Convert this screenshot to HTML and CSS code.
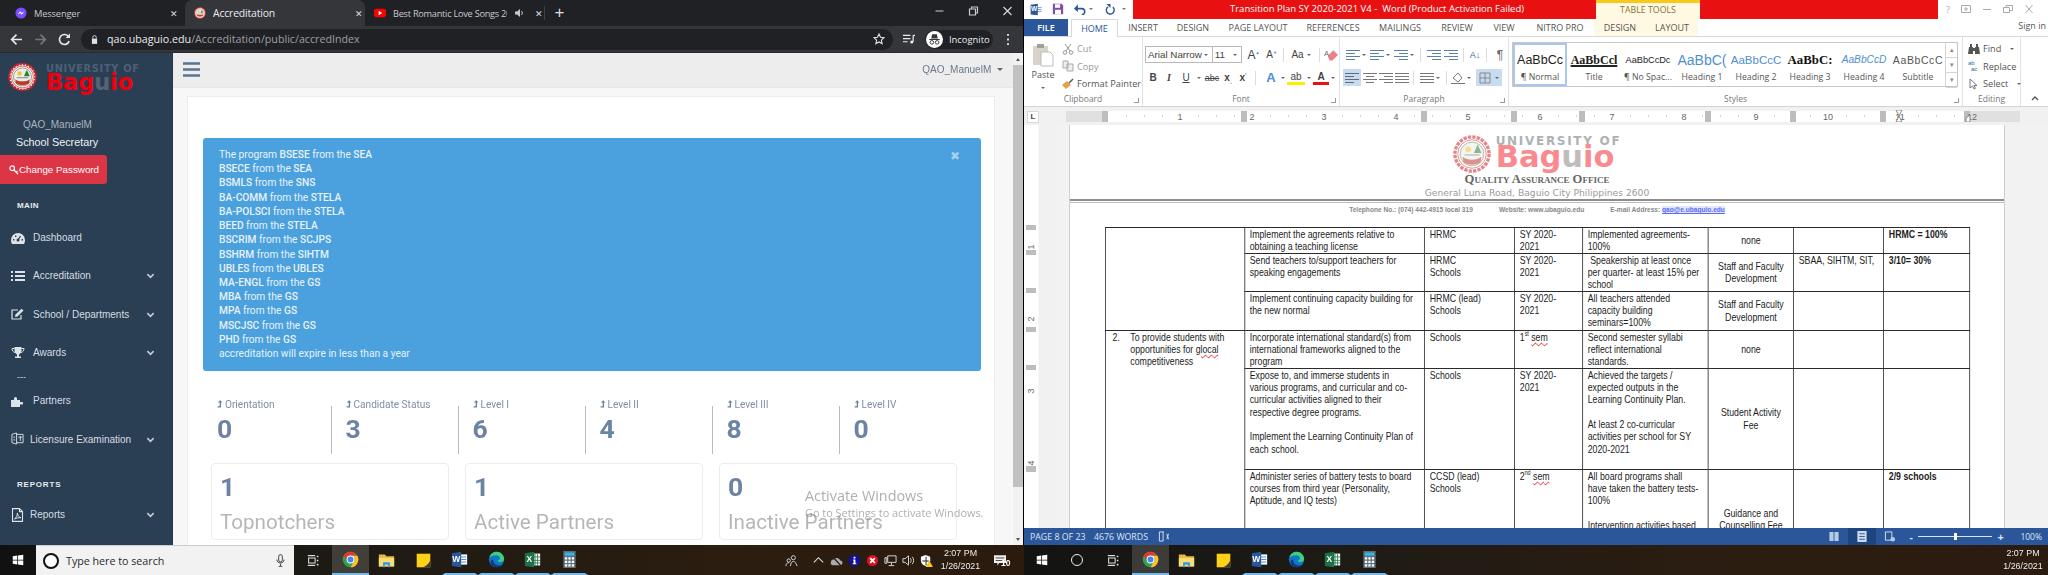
FILE: index.html
```html
<!DOCTYPE html>
<html lang="en">
<head>
<meta charset="utf-8">
<title>Desktop</title>
<link rel="stylesheet" href="styles.css">
</head>
<body>
<svg class="defs" aria-hidden="true">
  <symbol id="seal" viewBox="0 0 40 40">
    <circle cx="20" cy="20" r="18" fill="#fff" stroke="#d2232a" stroke-width="3.5" stroke-dasharray="3.5 1.2"/>
    <circle cx="20" cy="20" r="15" fill="#fff" stroke="#c0392b" stroke-width="1"/>
    <circle cx="20" cy="20" r="12.5" fill="#e9efe9" stroke="#777" stroke-width="1"/>
    <circle cx="16" cy="15" r="3" fill="#f2c230"/>
    <path d="M26 10l4 9h-8z" fill="#2e7d32"/>
    <path d="M10 23c5 4 15 4 20 0l-1 6c-5 3-13 3-18 0z" fill="#c0392b"/>
    <path d="M12 21h16" stroke="#888" stroke-width="1.4"/>
  </symbol>
  <symbol id="win" viewBox="0 0 16 16"><path fill="#fff" d="M1 3l6-.9V7.500H1zM8 2l7-1v6.500H8zM1 8.500h6v5.400l-6-.9zM8 8.500h7V15l-7-1z"/></symbol>
  <symbol id="taskview" viewBox="0 0 16 16"><path fill="none" stroke="#ddd" stroke-width="1.300" d="M1 2h9M1 14h9M2 5h8v6H2z"/><path stroke="#ddd" stroke-width="2" d="M13 2v2M13 7v2M13 12v2"/></symbol>
  <symbol id="chrome" viewBox="0 0 24 24">
    <circle cx="12" cy="12" r="11" fill="#2fa24d"/>
    <path fill="#fbc02d" d="M21.530 6.500A11 11 0 0 1 12 23l4.760-8.250A5.500 5.500 0 0 0 12 6.500z"/>
    <path fill="#e53935" d="M12 1a11 11 0 0 1 9.530 5.500H12a5.500 5.500 0 0 0-4.760 8.250L2.470 6.500A11 11 0 0 1 12 1z"/>
    <circle cx="12" cy="12" r="5.500" fill="#fff"/><circle cx="12" cy="12" r="4.200" fill="#4285f4"/>
  </symbol>
  <symbol id="explorer" viewBox="0 0 20 20"><path fill="#e8b93e" d="M1 3h7l2 2h9v12H1z"/><path fill="#f9dc7a" d="M1 7h18v10H1z"/><path fill="#2e9bdc" d="M6 12h8v6h-2v-3H8v3H6z"/></symbol>
  <symbol id="sticky" viewBox="0 0 20 20"><path fill="#fcd116" d="M2 2h16v16H2z"/><path fill="#3a3a3a" d="M18 9v9H9c4-1 8-5 9-9z"/></symbol>
  <symbol id="word" viewBox="0 0 20 20"><path fill="#fff" d="M9 4h10v12H9z"/><path stroke="#2b7cd3" d="M12 7h6M12 10h6M12 13h6"/><path fill="#2b579a" d="M1 2.500L12 1v18L1 17.500z"/><text x="6.200" y="13" class="icon-letter" text-anchor="middle">W</text></symbol>
  <symbol id="excel" viewBox="0 0 20 20"><path fill="#fff" d="M9 3h10v14H9z"/><path stroke="#217346" fill="none" d="M13 3v14M16 3v14M9 7h10M9 11h10M9 14h10"/><path fill="#1e7145" d="M1 2.500L12 1v18L1 17.500z"/><text x="6.200" y="13" class="icon-letter" text-anchor="middle">X</text></symbol>
  <symbol id="edge" viewBox="0 0 20 20"><circle cx="10" cy="10" r="9" fill="#0f78c8"/><path fill="#3fd07d" d="M1.500 8C3 3 7 1 10 1c5 0 9 4 9 8.500 0 2.500-2 3.500-4.500 3.500-1.500 0-3-.6-3.500-1.500 2-.5 3-1.500 3-3C14 6 12 5 9.500 5 6 5 3 6.500 1.500 8z"/><path fill="#123a7d" d="M6 10c0 4 3 7 7 7 1.500 0 3-.5 4-1.500-1 2.500-4 3.500-7 3.500-4 0-7-3-7-6 0-1.500 1-3 3-3z"/></symbol>
  <symbol id="calc" viewBox="0 0 18 22"><path fill="#5c6f7b" d="M1 0h16v22H1z"/><path fill="#37b6e8" d="M3 2h12v4H3z"/><path fill="#fff" d="M3 8h3v3H3zM7.500 8h3v3h-3zM12 8h3v3h-3zM3 12.500h3v3H3zM7.500 12.500h3v3h-3zM12 12.500h3v3h-3zM3 17h3v3H3zM7.500 17h3v3h-3zM12 17h3v3h-3z"/></symbol>
  <symbol id="chev" viewBox="0 0 10 10"><path fill="none" stroke="currentColor" stroke-width="1.800" d="M1.500 3.500L5 7l3.500-3.500"/></symbol>
  <symbol id="levelup" viewBox="0 0 8 10"><path fill="currentColor" d="M4.200 0L7.200 3H5.400v6.500H.8V8h2.800V3H1.200z"/></symbol>
  <symbol id="l-left" viewBox="0 0 14 12"><path stroke="currentColor" d="M0 1.500h14M0 4.500h9M0 7.500h14M0 10.500h9"/></symbol>
  <symbol id="l-center" viewBox="0 0 14 12"><path stroke="currentColor" d="M0 1.500h14M3 4.500h8M0 7.500h14M3 10.500h8"/></symbol>
  <symbol id="l-right" viewBox="0 0 14 12"><path stroke="currentColor" d="M0 1.500h14M5 4.500h9M0 7.500h14M5 10.500h9"/></symbol>
  <symbol id="l-just" viewBox="0 0 14 12"><path stroke="currentColor" d="M0 1.500h14M0 4.500h14M0 7.500h14M0 10.500h14"/></symbol>
</svg>

<div class="desktop">
  <!-- ============ browser ============ -->
  <section class="chrome">
    <div class="tabstrip">
      <div class="tab first">
        <svg class="favicon" viewBox="0 0 14 14"><circle cx="7" cy="7" r="6.500" fill="#7a4dff"/><path d="M3 9l3-4 2 2 3-2-3 4-2-2z" fill="#fff"/></svg>
        <span class="tab-title">Messenger</span><span class="tab-x">✕</span>
      </div>
      <div class="tab active">
        <svg class="favicon"><use href="#seal"/></svg>
        <span class="tab-title">Accreditation</span><span class="tab-x">✕</span>
      </div>
      <div class="tab last">
        <svg class="favicon" viewBox="0 0 14 14"><rect y="2" width="14" height="10" rx="2.500" fill="#f00"/><path d="M5.500 4.500v5l4-2.500z" fill="#fff"/></svg>
        <span class="tab-title">Best Romantic Love Songs 20</span>
        <svg class="tab-sound" viewBox="0 0 10 10"><path fill="#c8c8c8" d="M0 3.500h2L5 1v8L2 6.500H0z"/><path fill="none" stroke="#c8c8c8" d="M6.500 3c1 1 1 3 0 4"/></svg>
        <span class="tab-x">✕</span>
      </div>
      <span class="tab-plus">+</span>
      <div class="winctl">
        <svg viewBox="0 0 10 10"><path stroke="#ccc" d="M1 5h8"/></svg>
        <svg viewBox="0 0 10 10"><path fill="none" stroke="#ccc" stroke-width="1.200" d="M1 3h6v6H1zM3 3V1h6v6H7"/></svg>
        <svg viewBox="0 0 10 10"><path stroke="#ddd" stroke-width="1.100" d="M1 1l8 8M9 1L1 9"/></svg>
      </div>
    </div>
    <div class="toolbar">
      <svg class="nav-ic" viewBox="0 0 12 12"><path fill="none" stroke="#e8eaed" stroke-width="1.500" d="M11 6H1.500M6 1.500L1.500 6 6 10.500"/></svg>
      <svg class="nav-ic" viewBox="0 0 12 12"><path fill="none" stroke="#777" stroke-width="1.500" d="M1 6h9.500M6 1.500L10.500 6 6 10.500"/></svg>
      <svg class="nav-ic" viewBox="0 0 12 12"><path fill="none" stroke="#e8eaed" stroke-width="1.500" d="M10.300 7.500A4.600 4.600 0 1 1 9.500 3"/><path fill="#e8eaed" d="M7 4.500h4V.5z"/></svg>
      <div class="omnibox">
        <svg class="lock" viewBox="0 0 8 10"><path fill="#dfe1e5" d="M1 4h6v6H1z"/><path fill="none" stroke="#dfe1e5" d="M2 4V2.500a2 2 0 0 1 4 0V4"/></svg>
        <span class="url"><b>qao.ubaguio.edu</b>/Accreditation/public/accredIndex</span>
        <svg class="star" viewBox="0 0 12 12"><path fill="none" stroke="#dfe1e5" stroke-width="1.100" d="M6 1l1.500 3.300 3.500.4-2.600 2.400.7 3.500L6 8.900l-3.100 1.700.7-3.500L1 4.700l3.500-.4z"/></svg>
      </div>
      <svg class="media" viewBox="0 0 13 10"><path stroke="#e8eaed" stroke-width="1.300" d="M0 1h8M0 4.500h8M0 8h5"/><path fill="none" stroke="#e8eaed" stroke-width="1.300" d="M11 1h2M11 1v7"/><circle cx="9.500" cy="8.200" r="1.700" fill="#e8eaed"/></svg>
      <div class="incognito">
        <svg viewBox="0 0 18 18"><circle cx="9" cy="9" r="9" fill="#fff"/><path fill="#35363a" d="M5.500 8l1-4.500h5l1 4.500zM3.500 8.500h11v1h-11z"/><circle cx="6.200" cy="12" r="1.900" fill="none" stroke="#35363a"/><circle cx="11.800" cy="12" r="1.900" fill="none" stroke="#35363a"/></svg>
        <span>Incognito</span>
      </div>
      <svg class="dots" viewBox="0 0 4 12"><path fill="#e8eaed" d="M1 0h2v2H1zM1 5h2v2H1zM1 10h2v2H1z"/></svg>
    </div>
    <div class="site">
      <aside class="sidebar">
        <div class="brand">
          <svg class="brand-seal"><use href="#seal"/></svg>
          <div class="brand-text">
            <div class="brand-top">UNIVERSITY OF</div>
            <div class="brand-name">Bag<i>u</i>io</div>
          </div>
        </div>
        <div class="user-name">QAO_ManuelM</div>
        <div class="user-role">School Secretary</div>
        <a class="btn-pass">
          <svg viewBox="0 0 10 10"><circle cx="3.200" cy="3.200" r="2.300" fill="none" stroke="#fff" stroke-width="1.200"/><path stroke="#fff" stroke-width="1.300" d="M5 5l4 4M7 7l1.500-1"/></svg>
          Change Password
        </a>
        <h3 class="nav-head main">MAIN</h3>
        <a class="nav-item"><svg class="nav-svg" viewBox="0 0 14 12"><path fill="#dce3e9" d="M7 1a7 7 0 0 0-7 7c0 1.500.5 3 1 4h12c.5-1 1-2.500 1-4a7 7 0 0 0-7-7z"/><path stroke="#2a3f54" stroke-width="1.300" d="M7 8l2.500-4"/><circle cx="7" cy="8" r="1.500" fill="#2a3f54"/><path fill="#2a3f54" d="M2 7h1.400v1.400H2zM4 3.500h1.400v1.400H4zM10.600 7H12v1.400h-1.400z"/></svg><span>Dashboard</span></a>
        <a class="nav-item has-sub"><svg class="nav-svg" viewBox="0 0 14 12"><path stroke="#dce3e9" stroke-width="2" d="M0 2h2M4 2h10M0 6h2M4 6h10M0 10h2M4 10h10"/></svg><span>Accreditation</span><svg class="chev"><use href="#chev"/></svg></a>
        <a class="nav-item has-sub"><svg class="nav-svg" viewBox="0 0 14 12"><path fill="none" stroke="#dce3e9" stroke-width="1.200" d="M10 7v4H1V2h6"/><path fill="#dce3e9" d="M4.500 6.500L10.500.8l2 1.700L6.500 8.500l-2.500.5z"/></svg><span>School / Departments</span><svg class="chev"><use href="#chev"/></svg></a>
        <a class="nav-item has-sub"><svg class="nav-svg" viewBox="0 0 14 12"><path fill="#dce3e9" d="M3.500 0h7v3.500c0 2-1.500 3.500-2.500 4V9.500h2V11H4V9.500h2v-2C5 7 3.500 5.500 3.500 3.500z"/><path fill="none" stroke="#dce3e9" d="M3.500 1.500H1c0 2 1 3.500 3 4M10.500 1.500H13c0 2-1 3.500-3 4"/></svg><span>Awards</span><svg class="chev"><use href="#chev"/></svg></a>
        <div class="nav-dash">---</div>
        <a class="nav-item"><svg class="nav-svg" viewBox="0 0 14 12"><path fill="#dce3e9" d="M0 5h3V3.500a1.500 1.500 0 1 1 3 0V5h3v2h1.500a1.300 1.300 0 1 1 0 2.500H9V12H0z"/></svg><span>Partners</span></a>
        <a class="nav-item has-sub tight"><svg class="nav-svg" viewBox="0 0 14 14"><path fill="none" stroke="#dce3e9" d="M1 2l5-1.500v12L1 11zM6 2l7 0v9H6"/><path stroke="#dce3e9" d="M8 5h4M10 4v5M2.500 5h2M2.500 8h2"/></svg><span>Licensure Examination</span><svg class="chev"><use href="#chev"/></svg></a>
        <h3 class="nav-head reports">REPORTS</h3>
        <a class="nav-item has-sub tight"><svg class="nav-svg" viewBox="0 0 12 14"><path fill="none" stroke="#dce3e9" stroke-width="1.100" d="M1 .6h7l3 3v9.800H1zM8 .6v3h3"/><path fill="none" stroke="#dce3e9" d="M3 11c2-1 3-4 2.800-6 .7 3 2 4.500 3.700 4.800-2-.3-4.500.2-6.500 1.200z"/></svg><span>Reports</span><svg class="chev"><use href="#chev"/></svg></a>
      </aside>
      <main class="main-col">
        <header class="navbar">
          <svg class="burger" viewBox="0 0 17 15"><path stroke="#5a738e" stroke-width="2.400" d="M0 1.500h17M0 7.500h17M0 13.500h17"/></svg>
          <span class="nav-user">QAO_ManuelM <i class="caret"></i></span>
        </header>
        <div class="content">
          <div class="panel">
            <div class="alert">
              <span class="alert-x">✖</span>
              <p>The program <b>BSESE</b> from the <b>SEA</b></p>
              <p><b>BSECE</b> from the <b>SEA</b></p>
              <p><b>BSMLS</b> from the <b>SNS</b></p>
              <p><b>BA-COMM</b> from the <b>STELA</b></p>
              <p><b>BA-POLSCI</b> from the <b>STELA</b></p>
              <p><b>BEED</b> from the <b>STELA</b></p>
              <p><b>BSCRIM</b> from the <b>SCJPS</b></p>
              <p><b>BSHRM</b> from the <b>SIHTM</b></p>
              <p><b>UBLES</b> from the <b>UBLES</b></p>
              <p><b>MA-ENGL</b> from the <b>GS</b></p>
              <p><b>MBA</b> from the <b>GS</b></p>
              <p><b>MPA</b> from the <b>GS</b></p>
              <p><b>MSCJSC</b> from the <b>GS</b></p>
              <p><b>PHD</b> from the <b>GS</b></p>
              <p>accreditation will expire in less than a year</p>
            </div>
            <div class="stats">
              <div class="stat"><div class="stat-label"><svg><use href="#levelup"/></svg>Orientation</div><div class="stat-num">0</div></div>
              <div class="stat"><div class="stat-label"><svg><use href="#levelup"/></svg>Candidate Status</div><div class="stat-num">3</div></div>
              <div class="stat"><div class="stat-label"><svg><use href="#levelup"/></svg>Level I</div><div class="stat-num">6</div></div>
              <div class="stat"><div class="stat-label"><svg><use href="#levelup"/></svg>Level II</div><div class="stat-num">4</div></div>
              <div class="stat"><div class="stat-label"><svg><use href="#levelup"/></svg>Level III</div><div class="stat-num">8</div></div>
              <div class="stat"><div class="stat-label"><svg><use href="#levelup"/></svg>Level IV</div><div class="stat-num">0</div></div>
            </div>
            <div class="cards">
              <div class="card"><div class="card-num">1</div><div class="card-label">Topnotchers</div></div>
              <div class="card"><div class="card-num">1</div><div class="card-label">Active Partners</div></div>
              <div class="card"><div class="card-num">0</div><div class="card-label">Inactive Partners</div></div>
            </div>
          </div>
        </div>
        <div class="watermark"><div class="wm-1">Activate Windows</div><div class="wm-2">Go to Settings to activate Windows.</div></div>
      </main>
      <div class="scrollbar"><i class="sb-up"></i><i class="sb-thumb"></i><i class="sb-down"></i></div>
    </div>
  </section>

  <!-- ============ word ============ -->
  <section class="word">
    <div class="titlebar">
      <div class="qat">
        <svg class="qat-word"><use href="#word"/></svg>
        <svg class="qat-save" viewBox="0 0 14 14"><path fill="#7b4fa8" d="M1 1h10l2 2v10H1z"/><path fill="#fff" d="M3.500 1.500h6v4h-6zM3.500 8h7v5h-7z"/></svg>
        <svg class="qat-undo" viewBox="0 0 14 12"><path fill="none" stroke="#2b579a" stroke-width="1.800" d="M2 5h7a3.500 3.500 0 0 1 0 7"/><path fill="#2b579a" d="M4.500 0v9L0 5z"/></svg>
        <i class="qat-dd"></i>
        <svg class="qat-redo" viewBox="0 0 14 14"><path fill="none" stroke="#2b579a" stroke-width="1.800" d="M4 3.500a5 5 0 1 0 6 .5"/><path fill="#2b579a" d="M2 0h5v5z"/></svg>
        <i class="qat-custom"></i>
      </div>
      <div class="redbar"><span class="doc-title">Transition Plan SY 2020-2021 V4 -  Word (Product Activation Failed)</span></div>
      <div class="tt-head">TABLE TOOLS</div>
      <div class="redbar-end"></div>
      <div class="word-ctl">
        <span>?</span>
        <svg viewBox="0 0 10 8"><path fill="none" stroke="#aaa" d="M.5.500h9v7h-9zM5 2v4M3 4h4"/></svg>
        <svg viewBox="0 0 10 8"><path stroke="#aaa" d="M1 4.500h8"/></svg>
        <svg viewBox="0 0 10 8"><path fill="none" stroke="#aaa" d="M.5 2.500h6v5h-6zM3 2V.5h6.500v5H7"/></svg>
        <svg viewBox="0 0 10 8"><path stroke="#aaa" d="M1.500 0l7 8M8.500 0l-7 8"/></svg>
      </div>
    </div>
    <nav class="ribbon-tabs">
      <span class="rt file">FILE</span>
      <span class="rt home">HOME</span>
      <span class="rt w-insert">INSERT</span>
      <span class="rt w-design">DESIGN</span>
      <span class="rt w-layout">PAGE LAYOUT</span>
      <span class="rt w-ref">REFERENCES</span>
      <span class="rt w-mail">MAILINGS</span>
      <span class="rt w-review">REVIEW</span>
      <span class="rt w-view">VIEW</span>
      <span class="rt w-nitro">NITRO PRO</span>
      <span class="rt ctx w-ctx1">DESIGN</span>
      <span class="rt ctx w-ctx2">LAYOUT</span>
      <span class="signin">Sign in</span>
    </nav>
    <div class="ribbon">
      <div class="rgroup g-clip">
        <div class="rbody clip-body">
          <div class="paste">
            <svg viewBox="0 0 22 24"><path fill="#d9d3cb" d="M1 3h15v19H1z"/><path fill="#a79f96" d="M5 1h7v4H5z"/><path fill="#fff" stroke="#bbb" d="M9 9h9l3 3v11H9z"/></svg>
            <span>Paste</span><i class="dd"></i>
          </div>
          <div class="clip-list">
            <div class="ctool muted"><svg viewBox="0 0 12 12"><path fill="none" stroke="#999" d="M3 1l5 7M9 1L4 8"/><circle cx="3" cy="9.500" r="1.800" fill="none" stroke="#999"/><circle cx="9" cy="9.500" r="1.800" fill="none" stroke="#999"/></svg>Cut</div>
            <div class="ctool muted"><svg viewBox="0 0 12 12"><path fill="#eee" stroke="#aaa" d="M1 1h5v7H1zM5 4h6v7H5z"/></svg>Copy</div>
            <div class="ctool"><svg viewBox="0 0 12 12"><path fill="#e3a24a" d="M0 7l5-4 4 4-5 4z"/><path stroke="#555" stroke-width="1.500" d="M7 5l4-4"/></svg>Format Painter</div>
          </div>
        </div>
        <div class="rlabel">Clipboard<i class="launch"></i></div>
      </div>
      <div class="rgroup g-font">
        <div class="rbody stack">
          <div class="trow">
            <div class="combo c-font">Arial Narrow<i class="dd"></i></div>
            <div class="combo c-size">11<i class="dd"></i></div>
            <span class="t t-grow">A<sup>▲</sup></span>
            <span class="t t-shrink">A<sup>▼</sup></span>
            <i class="sep s1"></i>
            <span class="t t-case">Aa</span><i class="dd d-t"></i>
            <i class="sep s2"></i>
            <svg class="t-eraser" viewBox="0 0 16 14"><path fill="#e9828a" d="M4 8l6-6 5 5-6 6H6z"/><text x="0" y="8" class="mini-a">A</text></svg>
          </div>
          <div class="trow">
            <span class="t bold b-w">B</span>
            <span class="t ital b-w">I</span>
            <span class="t under u-w">U</span><i class="dd d-t"></i>
            <span class="t strike u-w">abc</span>
            <span class="t x-w bold">x<sub>₂</sub></span>
            <span class="t bold b-w">x<sup>²</sup></span>
            <i class="sep s3"></i>
            <span class="t effect b-w">A</span><i class="dd d-t"></i>
            <span class="t hilite h-w">ab</span><i class="dd d-t"></i>
            <span class="t fontcolor b-w">A</span><i class="dd d-t"></i>
          </div>
        </div>
        <div class="rlabel">Font<i class="launch"></i></div>
      </div>
      <div class="rgroup g-para">
        <div class="rbody stack">
          <div class="trow para-top">
            <svg class="pi"><use href="#l-left"/></svg><i class="dd d-t"></i>
            <svg class="pi"><use href="#l-left"/></svg><i class="dd d-t"></i>
            <svg class="pi"><use href="#l-right"/></svg><i class="dd d-t"></i>
            <i class="sep s4"></i>
            <svg class="pi pi-wide"><use href="#l-right"/></svg>
            <svg class="pi pi-wide"><use href="#l-right"/></svg>
            <i class="sep s4"></i>
            <span class="t sort">A↓</span>
            <i class="sep s4"></i>
            <span class="t pilcrow">¶</span>
          </div>
          <div class="trow para-bot">
            <span class="sel sel-a"><svg class="pi"><use href="#l-left"/></svg></span>
            <svg class="pi pj"><use href="#l-center"/></svg>
            <svg class="pi pj"><use href="#l-right"/></svg>
            <svg class="pi pj"><use href="#l-just"/></svg>
            <i class="sep s4"></i>
            <svg class="pi pj"><use href="#l-just"/></svg><i class="dd d-t"></i>
            <i class="sep s4"></i>
            <svg class="pi shade" viewBox="0 0 14 12"><path fill="none" stroke="#777" d="M2 6l5-5 4 5-4 4z"/><path stroke="#777" d="M0 11.500h14"/></svg><i class="dd d-t"></i>
            <span class="sel sel-b"><svg class="pi" viewBox="0 0 12 12"><path fill="none" stroke="#888" d="M1 1h10v10H1zM6 1v10M1 6h10"/></svg><i class="dd d-t"></i></span>
          </div>
        </div>
        <div class="rlabel">Paragraph<i class="launch"></i></div>
      </div>
      <div class="rgroup g-styles">
        <div class="rbody">
          <div class="gallery">
            <div class="style-item current"><span class="s-prev sp-normal">AaBbCc</span><span class="s-name">¶ Normal</span></div>
            <div class="style-item"><span class="s-prev sp-title">AaBbCcl</span><span class="s-name">Title</span></div>
            <div class="style-item"><span class="s-prev sp-nospace">AaBbCcDc</span><span class="s-name">¶ No Spac...</span></div>
            <div class="style-item"><span class="s-prev sp-h1">AaBbC(</span><span class="s-name">Heading 1</span></div>
            <div class="style-item"><span class="s-prev sp-h2">AaBbCcC</span><span class="s-name">Heading 2</span></div>
            <div class="style-item"><span class="s-prev sp-h3">AaBbC:</span><span class="s-name">Heading 3</span></div>
            <div class="style-item"><span class="s-prev sp-h4">AaBbCcD</span><span class="s-name">Heading 4</span></div>
            <div class="style-item"><span class="s-prev sp-sub">AaBbCcC</span><span class="s-name">Subtitle</span></div>
            <div class="gal-scroll"><span>▴</span><span>▾</span><span>▾</span></div>
          </div>
        </div>
        <div class="rlabel">Styles<i class="launch"></i></div>
      </div>
      <div class="rgroup g-edit">
        <div class="rbody edit-list">
          <div class="ctool"><svg viewBox="0 0 12 12"><path fill="#555" d="M1 4h4v7H0zM7 4h4l1 7H7zM2 1h2v3H2zM8 1h2v3H8zM5 5h2v3H5z"/></svg>Find<i class="dd d-e"></i></div>
          <div class="ctool"><svg viewBox="0 0 12 12"><text x="0" y="5" class="mini-ab">ab</text><text x="3" y="11" class="mini-ac">ac</text></svg>Replace</div>
          <div class="ctool"><svg viewBox="0 0 12 12"><path fill="#fff" stroke="#777" d="M2 1v9l2.500-2 1.500 3 1.500-.7L6 7.500h3z"/></svg>Select<i class="dd d-e"></i></div>
        </div>
        <div class="rlabel">Editing</div>
      </div>
      <div class="collapse"><svg viewBox="0 0 8 5"><path fill="none" stroke="#555" stroke-width="1.300" d="M1 4l3-3 3 3"/></svg></div>
    </div>
    <div class="hruler">
      <div class="ruler-tab">L</div>
      <svg class="hruler-svg" viewBox="0 0 954 12" width="954" height="12">
        <rect x="0" y="1" width="954" height="11" fill="#fff"/>
        <rect x="0" y="1" width="40" height="11" fill="#e0e0e0"/>
        <rect x="900" y="1" width="54" height="11" fill="#e0e0e0"/>
        <g class="r-col">
          <rect x="36" y="1" width="6" height="11"/><rect x="175" y="1" width="6" height="11"/><rect x="355" y="1" width="6" height="11"/><rect x="445" y="1" width="6" height="11"/><rect x="513" y="1" width="6" height="11"/><rect x="639" y="1" width="6" height="11"/><rect x="724" y="1" width="6" height="11"/><rect x="814" y="1" width="6" height="11"/><rect x="898" y="1" width="6" height="11"/>
        </g>
        <path class="r-ticks" d="M60 6h1M78 6h1M96 6h1M132 6h1M150 6h1M168 6h1M204 6h1M222 6h1M240 6h1M276 6h1M294 6h1M312 6h1M348 6h1M366 6h1M384 6h1M420 6h1M438 6h1M456 6h1M492 6h1M510 6h1M528 6h1M564 6h1M582 6h1M600 6h1M636 6h1M654 6h1M672 6h1M708 6h1M726 6h1M744 6h1M780 6h1M798 6h1M816 6h1M852 6h1M870 6h1M888 6h1"/>
        <g class="r-num"><text x="114" y="10">1</text><text x="186" y="10">2</text><text x="258" y="10">3</text><text x="330" y="10">4</text><text x="402" y="10">5</text><text x="474" y="10">6</text><text x="546" y="10">7</text><text x="618" y="10">8</text><text x="690" y="10">9</text><text x="762" y="10">10</text><text x="834" y="10">11</text><text x="906" y="10">12</text></g>
        <path fill="#fff" stroke="#888" d="M830 0h6l-3 6 3 6h-6l3-6zM900 8l4-3v7h-4z"/>
      </svg>
    </div>
    <div class="docpane">
      <div class="vruler">
        <svg viewBox="0 0 14 404" width="14" height="404">
          <rect x="2" y="0" width="10" height="404" fill="#fff"/>
          <g class="r-col"><rect x="2" y="100" width="10" height="5"/><rect x="2" y="125" width="10" height="5"/><rect x="2" y="163" width="10" height="5"/><rect x="2" y="202" width="10" height="5"/><rect x="2" y="240" width="10" height="5"/><rect x="2" y="341" width="10" height="6"/></g>
          <g class="r-num"><text transform="translate(10 122) rotate(-90)">1</text><text transform="translate(10 194) rotate(-90)">2</text><text transform="translate(10 266) rotate(-90)">3</text><text transform="translate(10 338) rotate(-90)">4</text></g>
        </svg>
      </div>
      <div class="page">
        <div class="letterhead">
          <div class="lh-logo">
            <svg class="lh-seal"><use href="#seal"/></svg>
            <div>
              <div class="lh-top">UNIVERSITY OF</div>
              <div class="lh-name">Bag<i>u</i>io</div>
            </div>
          </div>
          <div class="lh-office">Quality Assurance Office</div>
          <div class="lh-addr">General Luna Road, Baguio City Philippines 2600</div>
          <div class="lh-rule"></div>
          <div class="lh-contact"><span>Telephone No.: (074) 442-4915 local 319</span><span>Website: www.ubaguio.edu</span><span>E-mail Address: <u>qao@e.ubaguio.edu</u></span></div>
        </div>
        <table class="plan">
          <colgroup><col class="c1"><col class="c2"><col class="c3"><col class="c4"><col class="c5"><col class="c6"><col class="c7"><col class="c8"></colgroup>
          <tr class="r1">
            <td rowspan="3"></td>
            <td>Implement the agreements relative to obtaining a teaching license</td>
            <td>HRMC</td><td>SY 2020-<br>2021</td>
            <td>Implemented agreements-100%</td>
            <td class="mid">none</td><td></td><td class="strong">HRMC = 100%</td>
          </tr>
          <tr class="r2">
            <td>Send teachers to/support teachers for speaking engagements</td>
            <td>HRMC<br>Schools</td><td>SY 2020-<br>2021</td>
            <td>&nbsp;Speakership at least once per quarter- at least 15% per school</td>
            <td class="mid">Staff and Faculty Development</td><td>SBAA, SIHTM, SIT,</td><td class="strong">3/10= 30%</td>
          </tr>
          <tr class="r3">
            <td>Implement continuing capacity building for the new normal</td>
            <td>HRMC (lead)<br>Schools</td><td>SY 2020-<br>2021</td>
            <td>All teachers attended capacity building seminars=100%</td>
            <td class="mid">Staff and Faculty Development</td><td></td><td></td>
          </tr>
          <tr class="r4">
            <td rowspan="3"><div class="objective"><span>2.</span><span>To provide students with opportunities for <em>glocal</em> competitiveness</span></div></td>
            <td>Incorporate international standard(s) from international frameworks aligned to the program</td>
            <td>Schools</td><td>1<sup>st</sup> <em>sem</em></td>
            <td>Second semester syllabi reflect international standards.</td>
            <td class="mid">none</td><td></td><td></td>
          </tr>
          <tr class="r5">
            <td>Expose to, and immerse students in various programs, and curricular and co-curricular activities aligned to their respective degree programs.<br><br>Implement the Learning Continuity Plan of each school.</td>
            <td>Schools</td><td>SY 2020-<br>2021</td>
            <td>Achieved the targets / expected outputs in the Learning Continuity Plan.<br><br>At least 2 co-curricular activities per school for SY 2020-2021</td>
            <td class="mid">Student Activity Fee</td><td></td><td></td>
          </tr>
          <tr class="r6">
            <td>Administer series of battery tests to board courses from third year (Personality, Aptitude, and IQ tests)</td>
            <td>CCSD (lead)<br>Schools</td><td>2<sup>nd</sup> <em>sem</em></td>
            <td>All board programs shall have taken the battery tests-100%<br><br>Intervention activities based</td>
            <td class="mid">Guidance and Counselling Fee</td><td></td><td class="strong">2/9 schools</td>
          </tr>
        </table>
      </div>
      <div class="doc-side"></div>
    </div>
    <footer class="statusbar">
      <span class="sb-a">PAGE 8 OF 23</span>
      <span class="sb-b">4676 WORDS</span>
      <svg class="sb-book" viewBox="0 0 12 12"><path fill="none" stroke="#dde6f2" d="M1 1h4v10H1zM5 1h1M9 3l2 6M11 3L9 9"/></svg>
      <div class="sb-right">
        <svg class="sb-view" viewBox="0 0 12 12"><path fill="#b9cbe4" d="M1 1h4.500v10H1zM6.500 1H11v10H6.500z"/></svg>
        <span class="sb-sel"><svg class="sb-view" viewBox="0 0 12 12"><path fill="#cfdcec" d="M1 0h10v12H1z"/><path stroke="#2b579a" d="M3 3h6M3 6h6M3 9h6"/></svg></span>
        <svg class="sb-view web" viewBox="0 0 12 12"><path fill="none" stroke="#dde6f2" d="M1 1h7v9H1z"/><circle cx="9" cy="9" r="2.500" fill="#b9cbe4"/></svg>
        <span class="zoom-minus">-</span>
        <span class="zoom-track"><i></i></span>
        <span class="zoom-plus">+</span>
        <span class="zoom-pct">100%</span>
      </div>
    </footer>
  </section>

  <!-- ============ taskbars ============ -->
  <div class="taskbar">
    <span class="tb-start"><svg><use href="#win"/></svg></span>
    <div class="search">
      <i class="cortana"></i><span class="search-text">Type here to search</span>
      <svg class="mic" viewBox="0 0 10 14"><rect x="3" y="0.500" width="4" height="8" rx="2" fill="none" stroke="#333"/><path fill="none" stroke="#333" d="M1 6c0 5 8 5 8 0M5 10.500V13M3 13.500h4"/></svg>
    </div>
    <span class="tb-app tv"><svg><use href="#taskview"/></svg></span>
    <span class="tb-app on"><svg><use href="#chrome"/></svg></span>
    <span class="tb-app"><svg><use href="#explorer"/></svg></span>
    <span class="tb-app"><svg><use href="#sticky"/></svg></span>
    <span class="tb-app run"><svg><use href="#word"/></svg></span>
    <span class="tb-app run"><svg><use href="#edge"/></svg></span>
    <span class="tb-app run"><svg><use href="#excel"/></svg></span>
    <span class="tb-app run"><svg><use href="#calc"/></svg></span>
    <div class="tray">
      <svg class="tr people" viewBox="0 0 14 14"><circle cx="9" cy="4" r="2.200" fill="none" stroke="#ddd"/><circle cx="4" cy="7" r="1.800" fill="none" stroke="#ddd"/><path fill="none" stroke="#ddd" d="M1 13c0-2.500 1-3.500 3-3.500M6 13c0-3 1-5 3-5s3 2 4 5"/></svg>
      <svg class="tr" viewBox="0 0 14 14"><path fill="none" stroke="#ddd" stroke-width="1.200" d="M2 9l5-5 5 5"/></svg>
      <svg class="tr" viewBox="0 0 14 14"><path fill="#aaa" d="M1 9a3 3 0 0 1 3-3 4 4 0 0 1 7 1 2.500 2.500 0 0 1 0 5H3a2 2 0 0 1-2-3z"/><path stroke="#2b2016" stroke-width="1.500" d="M2 2l10 11"/></svg>
      <svg class="tr" viewBox="0 0 14 14"><circle cx="7" cy="7" r="6.500" fill="#12128c"/><path fill="#fff" d="M6 3h2v1.800H6zM5.500 6H8v4h1v1H5v-1h1V7h-.5z"/></svg>
      <svg class="tr" viewBox="0 0 14 14"><circle cx="7" cy="7" r="6" fill="#e01020"/><path stroke="#fff" stroke-width="2" d="M4.500 4.500l5 5M9.500 4.500l-5 5"/></svg>
      <svg class="tr" viewBox="0 0 14 14"><path fill="none" stroke="#ddd" d="M4 2h9v7H4zM8 9v3M5 12.500h6M1 4h2v6H1z"/></svg>
      <svg class="tr" viewBox="0 0 14 14"><path fill="none" stroke="#ddd" d="M1 5h2.500L7 2v10L3.500 9H1zM9 4.500c1 1.500 1 3.500 0 5M11 3c2 2 2 6 0 8"/></svg>
      <svg class="tr" viewBox="0 0 14 14"><path fill="#fff" d="M6 1l5 2v4c0 3-2 5-5 6-3-1-5-3-5-6V3z"/><path fill="#2b2016" d="M6 3v4H2.500V8H6v4h1V8h2.500V7H7V3z"/><path fill="#f5c518" d="M10 7l4 7H6z"/></svg>
      <div class="clock"><div>2:07 PM</div><div>1/26/2021</div></div>
      <div class="notif"><svg viewBox="0 0 14 12"><path fill="#eee" d="M0 0h14v9H6l-2 3V9H0z"/><path stroke="#333" d="M2 3h10M2 6h10"/></svg><span>10</span></div>
    </div>
  </div>
  <div class="taskbar right">
    <span class="tb-start"><svg><use href="#win"/></svg></span>
    <span class="tb-app circ"><i class="cortana light"></i></span>
    <span class="tb-app tv"><svg><use href="#taskview"/></svg></span>
    <span class="tb-app on"><svg><use href="#chrome"/></svg></span>
    <span class="tb-app"><svg><use href="#explorer"/></svg></span>
    <span class="tb-app"><svg><use href="#sticky"/></svg></span>
    <span class="tb-app run"><svg><use href="#word"/></svg></span>
    <span class="tb-app run"><svg><use href="#edge"/></svg></span>
    <span class="tb-app run"><svg><use href="#excel"/></svg></span>
    <span class="tb-app run"><svg><use href="#calc"/></svg></span>
    <div class="tray end-tray"><div class="clock end"><div>2:07 PM</div><div>1/26/2021</div></div></div>
  </div>
</div>
</body>
</html>
```
FILE: styles.css
```css
* { box-sizing: border-box; }
html, body { margin: 0; padding: 0; background: #2a1c12; }
body { font-family: "Liberation Sans", Arial, sans-serif; }
.defs { position: absolute; width: 0; height: 0; }
.icon-letter { font: 700 10px "Liberation Sans", sans-serif; fill: #fff; }
p, h3 { margin: 0; }

.desktop {
  width: 2048px; height: 575px; overflow: hidden;
  display: grid;
  grid-template-columns: 1024px 1024px;
  grid-template-rows: 545px 30px;
  filter: blur(.3px);
}

/* ---------- chrome ---------- */
.chrome { display: flex; flex-direction: column; height: 545px; overflow: hidden; border-right: 1px solid #000; }
.tabstrip { height: 26px; background: #202124; display: flex; align-items: stretch; color: #c6c8cc; font: 10px "Open Sans", sans-serif; letter-spacing: -.15px; }
.tab { width: 180px; display: flex; align-items: center; padding-left: 15px; }
.tab.first { font-size: 9.300px; }
.tab.active { background: #35363a; color: #e8eaed; border-radius: 7px 7px 0 0; margin-left: 5px; padding-left: 9px; font-size: 10.400px; }
.tab.last { width: 173px; padding-left: 9px; font-size: 9.200px; letter-spacing: -.25px; }
.favicon { width: 12px; height: 12px; margin-right: 7px; flex: none; }
.tab-title { flex: 1; white-space: nowrap; overflow: hidden; }
.tab.last .tab-title { flex: none; width: 114px; }
.tab-sound { width: 10px; height: 10px; margin: 0 8px 0 8px; flex: none; }
.tab-x { width: 12px; flex: none; font-size: 9px; color: #dcdde0; text-align: center; }
.tab-plus { width: 30px; margin-left: 6px; border-left: 1px solid #3c4043; margin-top: 6px; height: 14px; color: #dcdde0; font: 400 17px/13px "Liberation Sans", sans-serif; text-align: center; }
.winctl { margin-left: auto; display: flex; gap: 23px; padding: 6px 10px 0 0; }
.winctl svg { width: 11px; height: 10px; }
.toolbar { height: 27px; background: #35363a; display: flex; align-items: center; padding-left: 10px; border-bottom: 1px solid #2a2b2e; }
.nav-ic { width: 13px; height: 13px; margin-right: 11px; }
.omnibox { width: 812px; margin-left: -1px; height: 21px; background: #202124; border-radius: 11px; display: flex; align-items: center; padding: 0 8px 0 10px; }
.lock { width: 7px; height: 9px; margin-right: 9px; }
.url { font: 10.700px "Open Sans", sans-serif; color: #9aa0a6; }
.url b { font-weight: 400; color: #e8eaed; }
.star { width: 12px; height: 12px; margin-left: auto; }
.media { width: 12px; height: 10px; margin: 0 10px 0 10px; }
.incognito { width: 68px; height: 19px; background: #202124; border-radius: 10px; display: flex; align-items: center; gap: 6px; padding-left: 1px; font: 9.400px "Open Sans", sans-serif; color: #e8eaed; }
.incognito svg { width: 17px; height: 17px; }
.dots { width: 4px; height: 11px; margin-left: 13px; }

.site { flex: 1; display: flex; min-height: 0; }
.sidebar { width: 173px; flex: none; background: #2a3f54; color: #cfd6dd; border-right: 1px solid #24364a; }
.brand { display: flex; gap: 9px; padding: 9px 0 0 8px; height: 58px; }
.brand-seal { width: 29px; height: 30px; flex: none; }
.brand-top { font: 700 9.800px/11px "DejaVu Sans", sans-serif; color: #4e6076; letter-spacing: .7px; white-space: nowrap; margin-top: 1px; }
.brand-name { font: 700 22.500px/17px "DejaVu Sans", sans-serif; color: #f0000f; letter-spacing: -.1px; }
.brand-name i { font-style: normal; color: #546477; }
.user-name { font-size: 10px; color: #aab4bf; padding-left: 23px; margin-top: 7px; line-height: 13px; }
.user-role { font-size: 10.800px; color: #eef1f4; padding-left: 16px; line-height: 13px; margin-top: 5px; }
.btn-pass { display: flex; align-items: center; width: 107px; height: 29px; margin-top: 6px; padding-left: 9px; background: #dc3545; border-radius: 0 3px 3px 0; color: #fff; font-size: 9.800px; }
.btn-pass svg { width: 10px; height: 10px; flex: none; }
.nav-head { font-size: 8px; font-weight: 700; color: #e7ecf0; padding-left: 17px; line-height: 10px; letter-spacing: .4px; }
.nav-head.main { margin-top: 17px; }
.nav-head.reports { margin-top: 21.500px; letter-spacing: .8px; }
.nav-item { display: flex; align-items: center; height: 38.300px; padding-left: 11px; font-size: 10px; color: #d6dce2; }
.nav-head.main + .nav-item { margin-top: 7.500px; }
.nav-svg { width: 14px; height: 12px; flex: none; margin-right: 8px; }
.nav-item.tight .nav-svg { width: 13px; height: 14px; margin-right: 6px; }
.chev { width: 9px; height: 9px; color: #c4ccd4; margin-left: auto; margin-right: 17px; }
.nav-dash { font-size: 9px; line-height: 10px; padding-left: 17px; }
.nav-head.reports + .nav-item { margin-top: 6px; }

.main-col { flex: 1; min-width: 0; display: flex; flex-direction: column; position: relative; overflow: hidden; background: #f7f7f7; }
.navbar { height: 35px; flex: none; background: #ededed; border-bottom: 1px solid #e4e6e8; display: flex; align-items: center; justify-content: space-between; padding: 0 10px; }
.burger { width: 17px; height: 15px; margin-top: -1px; }
.nav-user { font-size: 10px; color: #6b7a8a; margin-top: -2px; }
.caret { display: inline-block; border: 3px solid transparent; border-top: 3.500px solid #5a6a7a; border-bottom: 0; margin-left: 3px; vertical-align: 2px; }
.content { flex: 1; padding: 8px 18px 0 14px; min-height: 0; }
.panel { height: 100%; background: #fff; border: 1px solid #e9edef; border-bottom: 0; padding: 41px 13px 0 15px; overflow: hidden; }
.alert { position: relative; height: 233px; background: #4aa1dd; color: #e8f2fa; border-radius: 3px; padding: 10px 16px; font: 400 10.200px/14.220px Roboto, sans-serif; }
.alert b { font-weight: 500; }
.alert-x { position: absolute; right: 21px; top: 11px; color: #a4d0ee; font-size: 12px; line-height: 14px; }
.stats { display: flex; margin-top: 35px; height: 48px; }
.stat { width: 127px; padding-left: 14px; border-left: 1.500px solid #b8bcc0; }
.stat:first-child { border-left: 0; width: 127.500px; }
.stat-label { font: 10.100px/9px Roboto, sans-serif; color: #7d8fa3; margin-top: -7px; white-space: nowrap; display: flex; align-items: center; height: 10px; }
.stat-label svg { width: 6px; height: 8px; color: #6a7f99; margin-right: 2px; flex: none; }
.stat-num { font: 700 26.500px/30px Roboto, sans-serif; color: #6b84a3; margin-top: 5px; }
.cards { display: flex; gap: 16px; margin: 9px 0 0 8px; }
.card { width: 238px; height: 77px; border: 1px solid #ececec; border-radius: 4px; padding: 8px; }
.card-num { font: 700 26.500px/30px Roboto, sans-serif; color: #6b84a3; }
.card-label { font: 400 20.600px/24px Roboto, sans-serif; color: #b6b6b6; margin-top: 8px; white-space: nowrap; }
.watermark { position: absolute; left: 632px; top: 434px; font-family: "Open Sans", sans-serif; color: rgba(120,120,120,.6); white-space: nowrap; }
.wm-1 { font-size: 14.400px; line-height: 18px; }
.wm-2 { font-size: 10.900px; line-height: 15px; }
.scrollbar { width: 10px; flex: none; background: #f1f1f1; display: flex; flex-direction: column; align-items: center; }
.sb-up { border: 2.500px solid transparent; border-bottom: 3px solid #555; border-top: 0; margin: 5px 0 4px; }
.sb-thumb { display: block; width: 100%; height: 422px; background: #c1c1c1; }
.sb-down { border: 2.500px solid transparent; border-top: 3px solid #555; border-bottom: 0; margin-top: auto; margin-bottom: 4px; }

/* ---------- word ---------- */
.word { background: #fff; display: flex; flex-direction: column; height: 545px; overflow: hidden; font-family: "Open Sans", sans-serif; }
.titlebar { height: 18.500px; display: flex; flex: none; }
.qat { width: 109px; display: flex; align-items: center; padding-left: 6px; }
.qat-word { width: 13px; height: 13px; margin-right: 9px; }
.qat-save { width: 12px; height: 12px; margin-right: 10px; }
.qat-undo { width: 12px; height: 11px; }
.qat-dd { border: 2px solid transparent; border-top: 2.500px solid #777; border-bottom: 0; margin: 0 12px 0 3px; }
.qat-redo { width: 11px; height: 11px; }
.qat-custom { border: 2px solid transparent; border-top: 2.500px solid #777; border-bottom: 0; margin-left: 6px; }
.redbar { width: 463px; background: #e81010; font-size: 9.500px; line-height: 18.500px; padding-left: 97px; white-space: pre; }
.doc-title { color: #fff; }
.tt-head { width: 104px; background: #fff9e3; border-top: 3px solid #f8c919; color: #8a7430; font-size: 8.800px; line-height: 15px; text-align: center; }
.redbar-end { width: 238px; background: #e81010; }
.word-ctl { flex: 1; display: flex; align-items: center; gap: 11px; padding-left: 8px; color: #aaa; font-size: 9px; }
.word-ctl svg { width: 10px; height: 8px; }
.ribbon-tabs { height: 18.500px; flex: none; display: flex; align-items: stretch; font-size: 9px; color: #555; border-bottom: 1px solid #d8d8d8; line-height: 18px; }
.rt { text-align: center; white-space: nowrap; }
.rt.file { width: 44px; background: #2b579a; color: #fff; font-weight: 600; margin-right: 3px; }
.rt.home { width: 47px; background: #fff; color: #2b579a; border: 1px solid #d8d8d8; border-bottom: 0; margin-bottom: -1px; }
.w-insert { width: 50px; }
.w-design { width: 50px; }
.w-layout { width: 80px; }
.w-ref { width: 70px; }
.w-mail { width: 64px; }
.w-review { width: 50px; }
.w-view { width: 44px; }
.w-nitro { width: 68px; }
.rt.ctx { background: #fff9e3; }
.w-ctx1 { width: 52px; }
.w-ctx2 { width: 52px; }
.signin { margin-left: auto; padding-right: 2px; font-size: 9px; color: #555; line-height: 13px; }
.ribbon { height: 70px; flex: none; display: flex; border-bottom: 1px solid #d4d4d4; background: #fff; color: #555; font-size: 9px; }
.rgroup { display: flex; flex-direction: column; border-right: 1px solid #e2e2e2; }
.rbody { flex: 1; min-height: 0; }
.rlabel { height: 13px; flex: none; text-align: center; font-size: 8.500px; line-height: 12px; color: #777; position: relative; }
.launch { position: absolute; right: 3px; bottom: 3px; width: 5px; height: 5px; border: 1px solid #999; border-top: 0; border-left: 0; }
.g-clip { width: 119px; }
.g-font { width: 197px; }
.g-para { width: 169px; }
.g-styles { width: 454px; }
.g-edit { width: 58px; }
.collapse { flex: 1; display: flex; align-items: flex-end; justify-content: center; padding-bottom: 5px; }
.collapse svg { width: 8px; height: 5px; }
.clip-body { display: flex; }
.paste { width: 38px; display: flex; flex-direction: column; align-items: center; padding-top: 6px; font-size: 9px; color: #555; }
.paste svg { width: 22px; height: 24px; margin-bottom: 1px; }
.dd { display: block; flex: none; border: 2px solid transparent; border-top: 2.500px solid #666; border-bottom: 0; }
.paste .dd { margin-top: 6px; }
.clip-list { padding-top: 3px; }
.ctool { display: flex; align-items: center; gap: 3px; height: 17.500px; white-space: nowrap; color: #555; font-size: 9.200px; }
.ctool svg { width: 12px; height: 12px; flex: none; }
.ctool.muted { color: #999; }
.stack { display: flex; flex-direction: column; gap: 6px; padding: 9px 0 0 2px; }
.trow { display: flex; align-items: center; height: 17px; }
.combo { display: flex; align-items: center; justify-content: space-between; height: 17px; border: 1px solid #b9b9b9; font: 9.800px "Liberation Sans", sans-serif; color: #444; padding: 0 4px 0 2px; white-space: nowrap; }
.c-font { width: 71px; border-right: 0; }
.c-size { width: 32px; margin-right: 2px; }
.t { display: inline-block; text-align: center; color: #444; font: 10px/14px "Liberation Sans", sans-serif; flex: none; }
.t sup, .t sub { font-size: 4px; line-height: 0; color: #2b7cd3; }
.t-grow { width: 19px; font-size: 12px; }
.t-shrink { width: 17px; font-size: 10px; }
.sep { flex: none; display: block; width: 1px; height: 14px; background: #ddd; }
.s1 { margin: 0 6px 0 3px; }
.s2 { margin: 0 4px 0 6px; }
.s3 { margin: 0 7px 0 4px; }
.s4 { margin: 0 4px; }
.t-case { width: 15px; }
.d-t { margin: 0 2px; }
.t-eraser { width: 16px; height: 14px; }
.mini-a { font: 8px "Liberation Sans", sans-serif; fill: #666; }
.bold { font-weight: 700; }
.ital { font-style: italic; font-family: "Liberation Serif", serif; font-weight: 700; }
.under { text-decoration: underline; }
.strike { text-decoration: line-through; font-size: 9px; }
.b-w { width: 16px; }
.u-w { width: 18px; }
.x-w { width: 14px; }
.h-w { width: 18px; border-bottom: 3px solid #ffee00; line-height: 11px; height: 14px; }
.effect { color: #4a90d9; font-size: 13px; font-weight: 700; }
.fontcolor { border-bottom: 3px solid #e81010; line-height: 11px; height: 14px; font-weight: 700; }
.pi { width: 14px; height: 12px; color: #667; flex: none; }
.para-top { padding-left: 2px; }
.para-top .pi { margin-left: 2px; color: #5a7fa8; }
.pi-wide { margin: 0 1px; }
.sort { width: 14px; color: #2b6cb0; font-size: 9px; }
.pilcrow { width: 18px; font-size: 12px; color: #666; }
.sel { display: flex; align-items: center; height: 17px; background: #c7dcf1; flex: none; }
.sel-a { width: 18px; justify-content: center; margin-left: 1px; }
.sel-b { width: 26px; padding-left: 2px; margin-left: 3px; gap: 1px; }
.pj { margin-left: 2px; color: #777; }
.gallery { display: flex; height: 45px; margin: 5px 4px 0 3px; border: 1px solid #c6c6c6; }
.style-item { width: 54px; flex: none; display: flex; flex-direction: column; align-items: center; padding-top: 6px; overflow: hidden; }
.style-item.current { border: 2px solid #a9c8ec; padding-top: 4px; }
.s-prev { height: 22px; white-space: nowrap; color: #222; font: 12.500px/22px "Liberation Sans", sans-serif; }
.s-name { font-size: 8.700px; line-height: 12px; color: #555; white-space: nowrap; }
.sp-title { font: 700 12px/22px "Liberation Serif", serif; text-decoration: underline; text-decoration-thickness: 2px; }
.sp-nospace { font-size: 9.200px; }
.sp-h1 { font-size: 14px; color: #4f8fd0; }
.sp-h2 { font-size: 11.500px; color: #4f8fd0; }
.sp-h3 { font: 700 12.800px/22px "Liberation Serif", serif; color: #111; }
.sp-h4 { font-size: 10.200px; font-style: italic; color: #4f8fd0; }
.sp-sub { font-size: 10.500px; color: #555; letter-spacing: .6px; }
.gal-scroll { flex: 1; display: flex; flex-direction: column; border-left: 1px solid #d4d4d4; font-size: 7px; color: #888; text-align: center; }
.gal-scroll span { flex: 1; line-height: 14px; border-bottom: 1px solid #d4d4d4; }
.edit-list { padding: 3px 0 0 5px; }
.d-e { margin-left: 6px; }
.mini-ab { font: 6px "Liberation Sans", sans-serif; fill: #2b6cb0; }
.mini-ac { font: 6px "Liberation Sans", sans-serif; fill: #2b6cb0; }

.hruler { height: 18px; flex: none; display: flex; align-items: center; background: #f1f1f1; }
.ruler-tab { width: 12px; height: 12px; margin: 1px 33px 0 3px; background: #fff; border: 1px solid #d8d8d8; font: 700 8px/10px "Liberation Sans", sans-serif; text-align: center; color: #444; flex: none; }
.hruler-svg { display: block; flex: none; margin-left: -6px; }
.r-col rect { fill: #bdbdbd; }
.r-ticks { stroke: #aaa; }
.r-num text { font: 9px "Liberation Sans", sans-serif; fill: #666; text-anchor: middle; }
.docpane { flex: 1; min-height: 0; display: flex; background: #f1f1f1; overflow: hidden; }
.vruler { width: 46px; flex: none; background: linear-gradient(to right, #fff 0, #fff 14px, #f0f0f0 15px, #f3f3f3 100%); border-right: 1px solid #cfcfcf; }
.vruler svg { display: block; }
.page { width: 935px; flex: none; background: #fff; overflow: hidden; border-right: 1px solid #cfcfcf; }
.doc-side { flex: 1; background: #f2f2f2; }
.letterhead { height: 102px; text-align: center; }
.lh-logo { display: flex; justify-content: center; gap: 5px; height: 48px; padding: 9.500px 0 0 0; }
.lh-seal { width: 38px; height: 38px; opacity: .55; }
.lh-top { font: 700 12px/13px "DejaVu Sans", sans-serif; letter-spacing: 1.700px; color: #aeb1b4; text-align: left; }
.lh-name { font: 700 30.500px/23px "DejaVu Sans", sans-serif; color: #f98a8f; text-align: left; margin-top: -3px; }
.lh-name i { font-style: normal; color: #bdbdbd; }
.lh-office { font: 700 12.600px/13px "Liberation Serif", serif; font-variant: small-caps; color: #666; }
.lh-addr { font: 9.200px/12px "DejaVu Sans", sans-serif; color: #9a9a9a; margin-top: 1px; }
.lh-rule { height: 4px; border-top: 2px solid #8d8d8d; border-bottom: 1px solid #bdbdbd; }
.lh-contact { display: flex; justify-content: center; gap: 26px; font: 700 6.600px/10px "Liberation Sans", sans-serif; color: #888; margin-top: 2px; }
.lh-contact u { color: #5a6cf0; background: #e3e8ff; }
/* Arial Narrow is emulated by condensing the table horizontally. */
.plan { width: 1053.800px; margin-left: 35px; border-collapse: collapse; table-layout: fixed; font: 10.700px/12.350px "Liberation Sans", sans-serif; color: #1c1c1c; transform: scaleX(.82); transform-origin: 0 0; }
.c1 { width: 169.500px; } .c2 { width: 219.500px; } .c3 { width: 109.800px; } .c4 { width: 82.900px; }
.c5 { width: 153.700px; } .c6 { width: 103.700px; } .c7 { width: 109.800px; } .c8 { width: 104.900px; }
.plan td { border: 1px solid #2b2b2b; padding: 0 6px; vertical-align: top; overflow: hidden; }
.plan td.mid { text-align: center; vertical-align: middle; }
.plan td.strong { font-weight: 700; }
.plan sup { font-size: 6.500px; line-height: 0; }
.plan em { font-style: normal; text-decoration: underline wavy #e01818 1px; text-underline-offset: 1px; }
.r1 { height: 25px; } .r2 { height: 38px; } .r3 { height: 39px; } .r4 { height: 38px; } .r5 { height: 101px; } .r6 { height: 100px; }
.objective { display: flex; gap: 13px; padding: 0 0 0 2px; }
.statusbar { height: 17px; flex: none; background: #2b579a; color: #dbe5f3; display: flex; align-items: center; font-size: 8.800px; padding-left: 6px; }
.sb-a { width: 64px; }
.sb-b { width: 64px; }
.sb-book { width: 12px; height: 11px; }
.sb-right { margin-left: auto; display: flex; align-items: center; height: 100%; }
.sb-view { width: 12px; height: 11px; display: block; }
.sb-sel { width: 28px; height: 100%; background: #1f4580; display: flex; align-items: center; justify-content: center; margin: 0 8px; }
.zoom-minus { margin-left: 13px; width: 9px; font-weight: 700; font-size: 10px; }
.zoom-track { position: relative; width: 74px; height: 1px; background: #dbe5f3; }
.zoom-track i { position: absolute; left: 36px; top: -3px; width: 3px; height: 7px; background: #fff; }
.zoom-plus { width: 11px; padding-left: 3px; font-weight: 700; font-size: 11px; margin-right: 15px; margin-left: 2px; }
.zoom-pct { margin-right: 6px; font-size: 8.500px; }

/* ---------- taskbar ---------- */
.taskbar { display: flex; align-items: stretch; height: 30px; background: linear-gradient(90deg, #111 0, #1c1a14 30%, #2b1d10 70%, #2a1b0e 100%); color: #ececec; }
.taskbar.right { background: linear-gradient(90deg, #131312 0, #1e1b15 30%, #2c1d11 70%, #2b1b10 100%); }
.tb-start { width: 36px; display: flex; align-items: center; justify-content: center; flex: none; }
.tb-start svg { width: 12px; height: 12px; }
.search { width: 258px; flex: none; background: #f2f2f2; display: flex; align-items: center; padding: 0 9px 0 7px; color: #2b2b2b; font: 10.700px "Open Sans", sans-serif; border-top: 1px solid #ccc; }
.cortana { width: 16px; height: 16px; border: 2.200px solid #111; border-radius: 50%; flex: none; margin-right: 7px; background: #fff; display: block; }
.cortana.light { width: 12px; height: 12px; border: 1.800px solid #eee; background: transparent; margin: 0; }
.search-text { white-space: nowrap; }
.mic { width: 9px; height: 13px; margin-left: auto; }
.tb-app { width: 36.500px; flex: none; display: flex; align-items: center; justify-content: center; }
.tb-app svg { width: 17px; height: 17px; }
.tb-app.tv svg { width: 13px; height: 13px; }
.tb-app.tv { width: 38px; }
.tb-app.circ { width: 34px; }
.tb-app.on { background: rgba(255,255,255,.16); border-bottom: 2px solid #74b9ec; }
.tb-app.run { border-bottom: 2px solid #74b9ec; border-left: 3px solid transparent; border-right: 3px solid transparent; }
.tray { margin-left: auto; display: flex; align-items: center; padding-right: 6px; }
.end-tray { padding-right: 3px; }
.tr { width: 13px; height: 13px; margin-left: 5px; flex: none; }
.tr.people { margin-right: 9px; }
.clock { font-size: 8.900px; line-height: 13.500px; text-align: center; width: 55px; }
.clock.end { width: 44px; }
.notif { width: 24px; position: relative; margin-left: 6px; }
.notif svg { width: 12px; height: 11px; display: block; }
.notif span { position: absolute; left: 7px; top: 3px; font-size: 8.500px; color: #fff; font-weight: 700; }
```
